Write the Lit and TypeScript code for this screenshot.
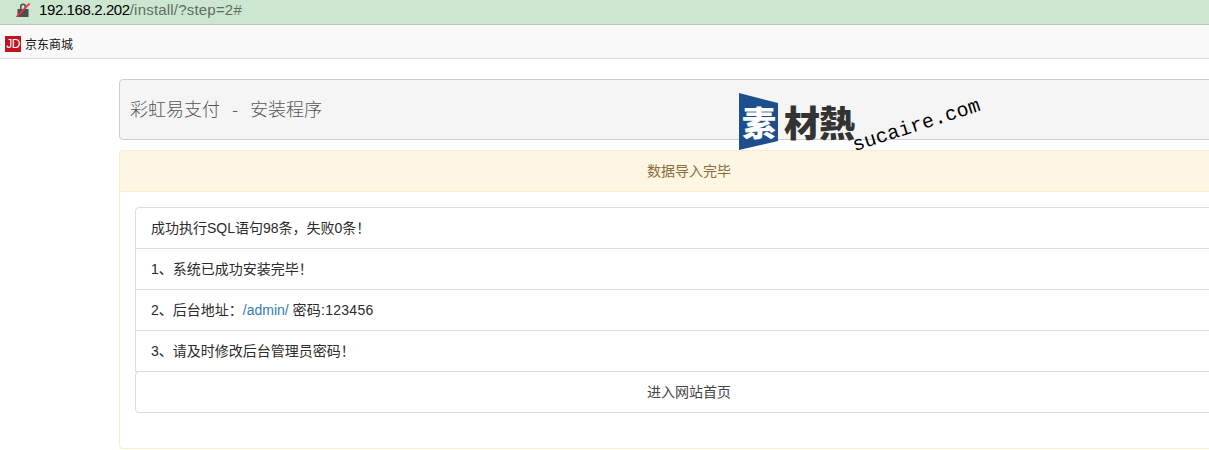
import { LitElement, html, css } from "lit";
import { customElement } from "lit/decorators.js";

@customElement("app-root")
export class AppRoot extends LitElement {
  static styles = css`
    :host {
      display: block;
      width: 1209px;
      height: 450px;
      overflow: hidden;
      position: relative;
      background: #fff;
      font-family: "Liberation Sans", "Noto Sans CJK SC", sans-serif;
      font-size: 14px;
      color: #333;
    }
    .url {
      height: 24px;
      box-sizing: border-box;
      background: #cde6d0;
      padding: 0 0 5px 16px;
      display: flex;
      align-items: center;
      gap: 9px;
      font-size: 15px;
    }
    .url svg { display: block; }
    .host { color: #000; letter-spacing: -0.4px; }
    .path { color: #5f6f63; letter-spacing: 0.2px; }
    .bookmarks {
      height: 35px;
      box-sizing: border-box;
      background: #f9f9f9;
      border-top: 1px solid #b9c4ba;
      border-bottom: 1px solid #e0e0e0;
      display: flex;
      align-items: center;
      padding: 4px 0 0 5px;
      gap: 4px;
      font-size: 12px;
      color: #111;
    }
    .jd {
      width: 16px;
      height: 16px;
      background: #c5111f;
      color: #fff;
      font-size: 12px;
      line-height: 16px;
      text-align: center;
      letter-spacing: -0.5px;
    }
    .container {
      width: 1140px;
      margin-left: 119px;
      padding-top: 20px;
    }
    .title {
      height: 61px;
      box-sizing: border-box;
      background: #f5f5f5;
      border: 1px solid #ccc;
      border-radius: 4px;
      display: flex;
      align-items: center;
      padding: 0 0 4px 10px;
      font-size: 18px;
      font-family: "Noto Sans CJK SC", sans-serif;
      font-weight: 300;
      color: #555;
      white-space: pre;
      word-spacing: 2px;
      margin-bottom: 10px;
    }
    .panel {
      border: 1px solid #faebcc;
      border-radius: 4px;
      height: 299px;
      box-sizing: border-box;
    }
    .panel-head {
      height: 41px;
      box-sizing: border-box;
      background: #fdf6e3;
      border-bottom: 1px solid #faebcc;
      color: #8a6d3b;
      display: flex;
      align-items: center;
      justify-content: center;
      padding-bottom: 2px;
      border-radius: 3px 3px 0 0;
    }
    .panel-body { padding: 15px; }
    ul { list-style: none; margin: 0; padding: 0; }
    li {
      height: 42px;
      box-sizing: border-box;
      border: 1px solid #ddd;
      margin-bottom: -1px;
      padding: 0 15px 2px;
      display: flex;
      align-items: center;
      white-space: pre;
      background: #fff;
      color: #2b2b2b;
    }
    li:first-child { border-radius: 4px 4px 0 0; }
    li.btn {
      margin-bottom: 0;
      border-radius: 4px;
      justify-content: center;
      color: #444;
    }
    a { color: #337ab7; text-decoration: none; }
    .pw { letter-spacing: 0.25px; }
    .mark {
      position: absolute;
      left: 739px;
      top: 93px;
      width: 245px;
      height: 65px;
      pointer-events: none;
    }
    .mark svg { position: absolute; left: 0; top: 0; }
    .mark-box {
      position: absolute;
      left: 3px;
      top: 11px;
      font-size: 34px;
      line-height: 36px;
      font-weight: 900;
      color: #fff;
      font-family: "Noto Sans CJK SC", sans-serif;
    }
    .mark-name {
      position: absolute;
      left: 45px;
      top: 8px;
      font-size: 36px;
      line-height: 40px;
      letter-spacing: -1px;
      font-weight: 900;
      color: #333;
      font-family: "Noto Sans CJK TC", sans-serif;
    }
    .mark-url {
      position: absolute;
      left: 118px;
      top: 41px;
      font-size: 20px;
      line-height: 24px;
      color: #000;
      font-family: "Liberation Mono", monospace;
      letter-spacing: 0.1px;
      transform: rotate(-18deg);
      transform-origin: left bottom;
      white-space: nowrap;
    }
  `;

  render() {
    return html`
      <div class="url">
        <svg width="14" height="14" viewBox="0 0 14 14">
          <path d="M1.500 6h11v8h-11z M4 6V3.500a3 3 0 0 1 6 0V6H8.500V3.600a1.500 1.500 0 0 0-3 0V6z" fill="#4a4f4b"/>
          <path d="M0.500 14 13.500 0.500" stroke="#e8334a" stroke-width="1.800"/>
        </svg>
        <span><span class="host">192.168.2.202</span><span class="path">/install/?step=2#</span></span>
      </div>
      <div class="bookmarks">
        <span class="jd">JD</span><span>京东商城</span>
      </div>
      <div class="container">
        <div class="title">彩虹易支付  -  安装程序</div>
        <div class="panel">
          <div class="panel-head">数据导入完毕</div>
          <div class="panel-body">
            <ul>
              <li>成功执行SQL语句98条，失败0条！</li>
              <li>1、系统已成功安装完毕！</li>
              <li><span>2、后台地址：<a href="#">/admin/</a> <span class="pw">密码:123456</span></span></li>
              <li>3、请及时修改后台管理员密码！</li>
              <li class="btn">进入网站首页</li>
            </ul>
          </div>
        </div>
      </div>
      <div class="mark">
        <svg width="40" height="58" viewBox="0 0 40 58">
          <path d="M0 0 39 10V48L0 57z" fill="#1d4f8c"/>
        </svg>
        <span class="mark-box">素</span>
        <span class="mark-name">材熱</span>
        <span class="mark-url">sucaire.com</span>
      </div>
    `;
  }
}
